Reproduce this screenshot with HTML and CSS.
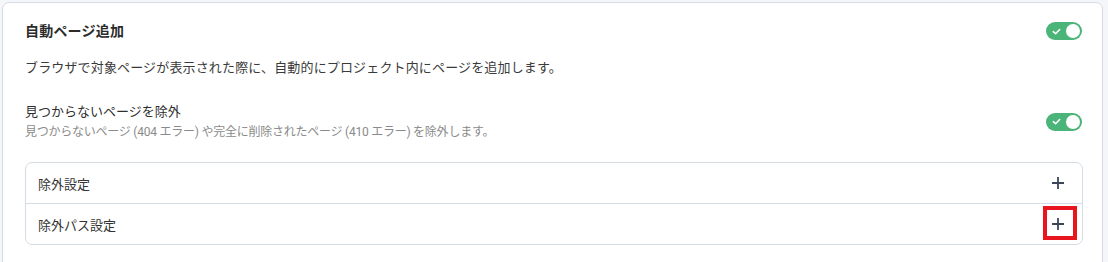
FILE: index.html
```html
<!DOCTYPE html>
<html lang="ja">
<head>
<meta charset="utf-8">
<link rel="stylesheet" href="styles.css">
</head>
<body>
<div class="page">
  <section class="card">
    <div class="row head">
      <h2 class="title">自動ページ追加</h2>
      <span class="toggle"><svg class="check" viewBox="0 0 10 10" width="9" height="9"><path d="M1.5 5.2 L4 7.5 L8.5 2.8" fill="none" stroke="#fff" stroke-width="1.8" stroke-linecap="round" stroke-linejoin="round"/></svg><span class="knob"></span></span>
    </div>
    <p class="desc">ブラウザで対象ページが表示された際に、自動的にプロジェクト内にページを追加します。</p>
    <div class="row option">
      <div class="opt-text">
        <div class="opt-title">見つからないページを除外</div>
        <div class="opt-sub">見つからないページ (404 エラー) や完全に削除されたページ (410 エラー) を除外します。</div>
      </div>
      <span class="toggle"><svg class="check" viewBox="0 0 10 10" width="9" height="9"><path d="M1.5 5.2 L4 7.5 L8.5 2.8" fill="none" stroke="#fff" stroke-width="1.8" stroke-linecap="round" stroke-linejoin="round"/></svg><span class="knob"></span></span>
    </div>
    <div class="accordion">
      <div class="acc-item">
        <span>除外設定</span>
        <span class="plus"><svg viewBox="0 0 14 14" width="14" height="14"><path d="M7 1 V13 M1 7 H13" stroke="#3b4656" stroke-width="1.8"/></svg></span>
      </div>
      <div class="acc-item">
        <span>除外パス設定</span>
        <span class="plus marked"><svg viewBox="0 0 14 14" width="14" height="14"><path d="M7 1 V13 M1 7 H13" stroke="#3b4656" stroke-width="1.8"/></svg></span>
      </div>
    </div>
  </section>
</div>
</body>
</html>
```
FILE: styles.css
```css
html, body {
  margin: 0;
  padding: 0;
}
body {
  background: #f4f6f9;
  font-family: Roboto, "Noto Sans CJK JP", sans-serif;
  color: #333;
}
.page {
  padding: 2px 5px 0 2px;
}
.card {
  background: #fff;
  border: 1px solid #d5dce5;
  border-radius: 7px;
  padding: 18px 20px 30px 22px;
  min-height: 260px;
  box-sizing: border-box;
}
.row {
  display: flex;
  align-items: center;
  justify-content: space-between;
}
.title {
  margin: 0;
  font-size: 14px;
  font-weight: 700;
  line-height: 20px;
  letter-spacing: 0.2px;
  color: #2b2b2b;
}
.toggle {
  position: relative;
  display: inline-flex;
  align-items: center;
  width: 36px;
  height: 18px;
  border-radius: 9px;
  background: #4bb478;
  flex: none;
}
.check {
  margin-left: 6px;
}
.knob {
  position: absolute;
  right: 2px;
  top: 2px;
  width: 14px;
  height: 14px;
  border-radius: 50%;
  background: #fff;
}
.desc {
  margin: 17px 0 0;
  font-size: 13px;
  line-height: 20px;
  letter-spacing: 0.15px;
  color: #3a3a3a;
}
.option {
  margin-top: 24px;
}
.opt-title {
  font-size: 13px;
  line-height: 20px;
  color: #2f2f2f;
}
.opt-sub {
  margin-top: 1px;
  font-size: 12px;
  line-height: 18px;
  letter-spacing: -0.24px;
  color: #8a8a8a;
}
.accordion {
  margin-top: 21px;
  margin-right: -1px;
  border: 1px solid #d5dce5;
  border-radius: 7px;
}
.acc-item {
  display: flex;
  align-items: center;
  justify-content: space-between;
  height: 40px;
  padding: 0 17px 0 12px;
  font-size: 13px;
  color: #333;
}
.acc-item + .acc-item {
  border-top: 1px solid #d5dce5;
}
.plus {
  position: relative;
  display: inline-flex;
  width: 14px;
  height: 14px;
}
.marked::after {
  content: "";
  position: absolute;
  left: -8px;
  top: -11px;
  width: 34px;
  height: 34px;
  box-sizing: border-box;
  border: 4px solid #e8141e;
}
```
